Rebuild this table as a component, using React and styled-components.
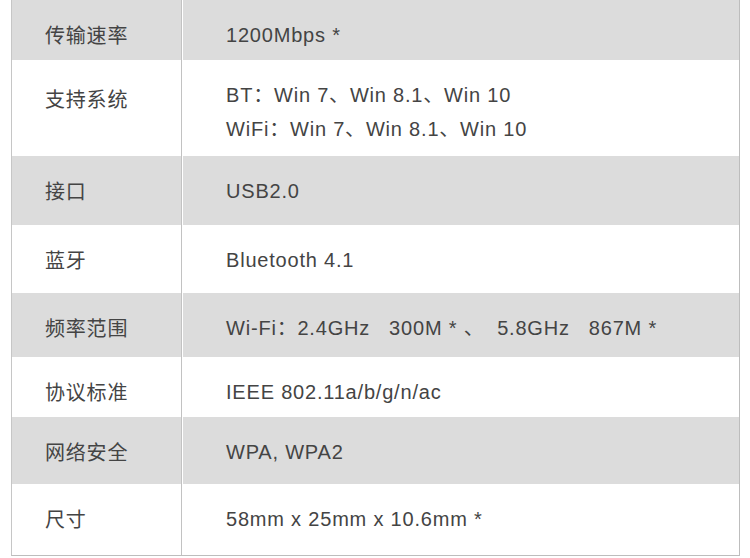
import React from "react";
import styled, { createGlobalStyle } from "styled-components";

const Global = createGlobalStyle`
  html, body {
    margin: 0;
    padding: 0;
    background: #ffffff;
  }
  body {
    font-family: "Liberation Sans", "Noto Sans CJK SC", sans-serif;
    color: #444444;
  }
`;

const Table = styled.div`
  margin-left: 11px;
  width: 729px;
  box-sizing: border-box;
  border-left: 1px solid #c6c6c6;
  border-right: 1px solid #bdbdbd;
  border-bottom: 1px solid #bdbdbd;
  display: flex;
  flex-direction: column;
`;

const Row = styled.div`
  display: grid;
  grid-template-columns: 170px 1fr;
  height: ${(p) => p.$h}px;
  background: ${(p) => (p.$shade ? "#dcdcdc" : "#ffffff")};
`;

const Label = styled.div`
  box-sizing: border-box;
  border-right: 1px solid #c2c2c2;
  padding: ${(p) => 19 + (p.$drop || 0)}px 0 0 33px;
  font-size: 20px;
  line-height: 34px;
  letter-spacing: 0.8px;
  white-space: nowrap;
`;

const Value = styled.div`
  box-sizing: border-box;
  border-left: 1px solid #ffffff;
  padding: 18px 0 0 43px;
  font-size: 20px;
  letter-spacing: 0.8px;
  white-space: pre;
`;

const Line = styled.div`
  height: 34px;
  line-height: 34px;
`;

const rows = [
  { label: "传输速率", h: 60, lines: ["1200Mbps *"] },
  {
    label: "支持系统",
    h: 96,
    drop: 4,
    lines: ["BT：Win 7、Win 8.1、Win 10", "WiFi：Win 7、Win 8.1、Win 10"],
  },
  { label: "接口", h: 69, lines: ["USB2.0"] },
  { label: "蓝牙", h: 68, lines: ["Bluetooth 4.1"] },
  {
    label: "频率范围",
    h: 64,
    lines: ["Wi-Fi：2.4GHz   300M * 、  5.8GHz   867M *"],
  },
  { label: "协议标准", h: 60, lines: ["IEEE 802.11a/b/g/n/ac"] },
  { label: "网络安全", h: 67, lines: ["WPA, WPA2"] },
  { label: "尺寸", h: 71, lines: ["58mm x 25mm x 10.6mm *"] },
];

export default function App() {
  return (
    <>
      <Global />
      <Table>
        {rows.map((r, i) => (
          <Row key={r.label} $h={r.h} $shade={i % 2 === 0}>
            <Label $drop={r.drop}>{r.label}</Label>
            <Value>
              {r.lines.map((l) => (
                <Line key={l}>{l}</Line>
              ))}
            </Value>
          </Row>
        ))}
      </Table>
    </>
  );
}
